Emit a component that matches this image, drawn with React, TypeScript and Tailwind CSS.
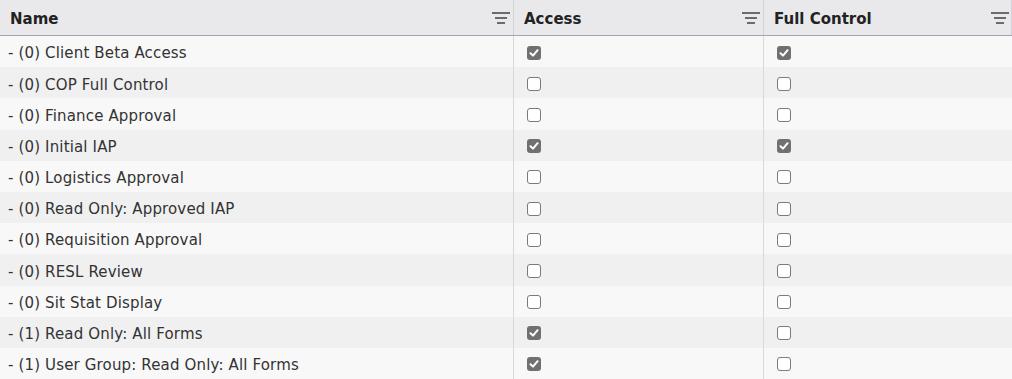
import React from "react";

type Row = { name: string; access: boolean; full: boolean };

const rows: Row[] = [
  { name: "- (0) Client Beta Access", access: true, full: true },
  { name: "- (0) COP Full Control", access: false, full: false },
  { name: "- (0) Finance Approval", access: false, full: false },
  { name: "- (0) Initial IAP", access: true, full: true },
  { name: "- (0) Logistics Approval", access: false, full: false },
  { name: "- (0) Read Only: Approved IAP", access: false, full: false },
  { name: "- (0) Requisition Approval", access: false, full: false },
  { name: "- (0) RESL Review", access: false, full: false },
  { name: "- (0) Sit Stat Display", access: false, full: false },
  { name: "- (1) Read Only: All Forms", access: true, full: false },
  { name: "- (1) User Group: Read Only: All Forms", access: true, full: false },
];

function FilterIcon() {
  return (
    <svg width="18" height="14" viewBox="0 0 18 14" className="shrink-0">
      <rect x="0" y="1" width="18" height="2" fill="#6b6b6b" />
      <rect x="3" y="6" width="12" height="2" fill="#6b6b6b" />
      <rect x="5" y="11" width="8" height="2" fill="#6b6b6b" />
    </svg>
  );
}

function Check({ on }: { on: boolean }) {
  if (on) {
    return (
      <div className="w-[14px] h-[14px] rounded-[3px] bg-[#707070] flex items-center justify-center">
        <svg width="10" height="10" viewBox="0 0 10 10">
          <path d="M1.5 5.2 L4 7.6 L8.6 2.2" stroke="#fff" strokeWidth="2" fill="none" strokeLinecap="round" strokeLinejoin="round" />
        </svg>
      </div>
    );
  }
  return <div className="w-[14px] h-[14px] rounded-[3px] bg-white border border-[#7a7a7a]" />;
}

export default function App() {
  return (
    <div className="w-[1012px] h-[379px] overflow-hidden bg-white text-[15px] text-[#333] tracking-[0.15px]" style={{ fontFamily: '"DejaVu Sans", Verdana, sans-serif' }}>
      <div className="flex h-[36px] bg-[#e9e9ec] border-b border-[#a3a3ae]">
        <div className="w-[514px] flex items-center justify-between pl-[10px] pr-[3px] border-r border-[#d4d4d8]">
          <span className="font-bold text-[#222] tracking-normal translate-y-[1.5px]">Name</span>
          <FilterIcon />
        </div>
        <div className="w-[250px] flex items-center justify-between pl-[10px] pr-[3px] border-r border-[#d4d4d8]">
          <span className="font-bold text-[#222] tracking-normal translate-y-[1.5px]">Access</span>
          <FilterIcon />
        </div>
        <div className="w-[248px] flex items-center justify-between pl-[10px] pr-[2px] border-r border-[#d4d4d8]">
          <span className="font-bold text-[#222] tracking-normal translate-y-[1.5px]">Full Control</span>
          <FilterIcon />
        </div>
      </div>
      {rows.map((r, i) => (
        <div key={i} className={`flex h-[31.2px] ${i % 2 === 0 ? "bg-[#f8f8f8]" : "bg-[#f0f0f1]"}`}>
          <div className="w-[514px] flex items-center pl-[8px] border-r border-[#d9d9d9]">
            <span className="translate-y-[2px]">{r.name}</span>
          </div>
          <div className="w-[250px] flex items-center pl-[13px] border-r border-[#d9d9d9]">
            <div className="translate-y-[1px]">
              <Check on={r.access} />
            </div>
          </div>
          <div className="w-[248px] flex items-center pl-[13px]">
            <div className="translate-y-[1px]">
              <Check on={r.full} />
            </div>
          </div>
        </div>
      ))}
    </div>
  );
}
